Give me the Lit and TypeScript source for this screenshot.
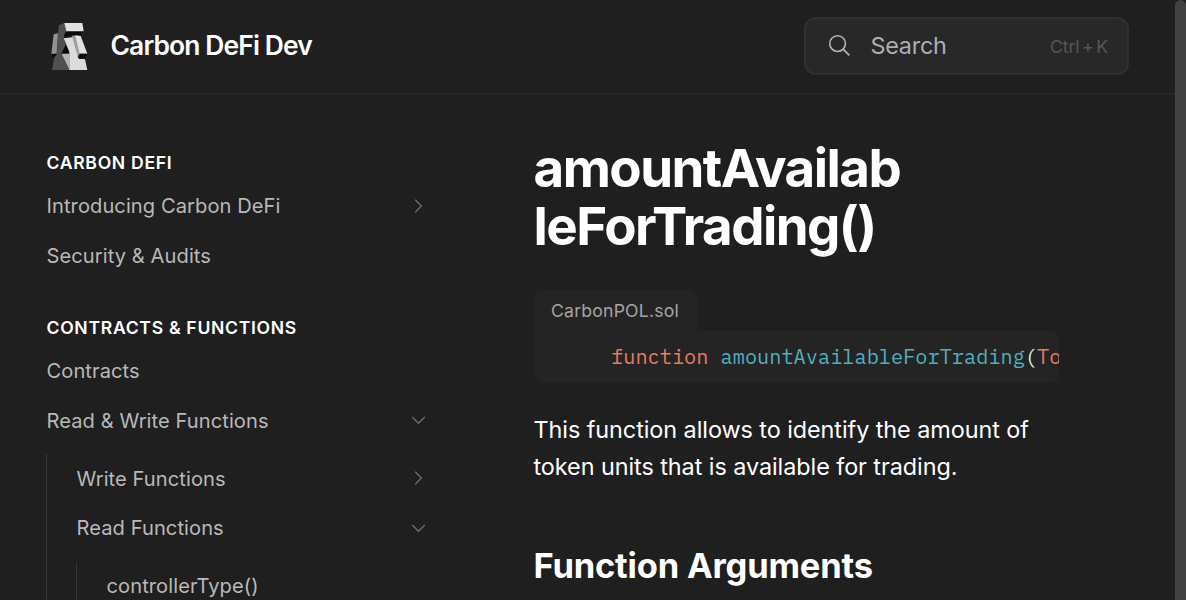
import { LitElement, html, css } from "lit";
import { customElement } from "lit/decorators.js";

interface NavItem {
  label: string;
  open?: boolean;
  children?: NavItem[];
}

const sections: { title: string; items: NavItem[] }[] = [
  {
    title: "Carbon DeFi",
    items: [{ label: "Introducing Carbon DeFi", open: false }, { label: "Security & Audits" }],
  },
  {
    title: "Contracts & Functions",
    items: [
      { label: "Contracts" },
      {
        label: "Read & Write Functions",
        open: true,
        children: [
          { label: "Write Functions", open: false },
          { label: "Read Functions", open: true, children: [{ label: "controllerType()" }] },
        ],
      },
    ],
  },
];

@customElement("app-root")
export class AppRoot extends LitElement {
  static styles = css`
    :host {
      display: flex;
      width: 1186px;
      height: 600px;
      overflow: hidden;
      background: #1f1f1f;
      color: #fff;
      font-family: Inter, sans-serif;
    }
    * { box-sizing: border-box; }
    svg { display: block; flex: none; }
    .page { width: 1175px; flex: none; }
    .scrollbar { width: 11px; height: 640px; flex: none; background: #424242; border-radius: 6px 6px 0 0; }
    .header {
      height: 95px;
      border-bottom: 2px solid #272727;
      display: flex;
      align-items: center;
      padding: 0 46px 1px 46px;
    }
    .mark { width: 47px; height: 47px; }
    .brand {
      margin: 0 0 2px 17.5px;
      font-size: 26.4px;
      font-weight: 600;
      letter-spacing: -0.85px;
      line-height: 36px;
      white-space: nowrap;
    }
    .search {
      margin-left: auto;
      width: 325px;
      height: 58px;
      border: 2px solid #303030;
      border-radius: 12px;
      background: #282828;
      display: flex;
      align-items: center;
      padding: 0 19px 1px 22px;
      color: #afafaf;
      font-size: 23.4px;
      letter-spacing: -0.25px;
      white-space: nowrap;
    }
    .search-icon { width: 23px; height: 23px; margin: 0 19.5px 1px 0; }
    .keys {
      margin-left: auto;
      font-size: 17.6px;
      color: #565656;
      letter-spacing: -0.1px;
      word-spacing: -2.2px;
      padding-top: 2px;
    }
    .body { display: flex; }
    .sidebar { width: 440px; flex: none; padding-top: 53px; }
    .section { margin-bottom: 33px; }
    .section-title {
      padding-left: 46.5px;
      height: 30px;
      line-height: 30px;
      font-size: 17.6px;
      font-weight: 600;
      letter-spacing: 0.69px;
      text-transform: uppercase;
      margin-bottom: 3.5px;
    }
    .row {
      display: flex;
      align-items: center;
      justify-content: space-between;
      height: 49.4px;
      padding: 0 14px 0 46.5px;
      font-size: 20.1px;
      letter-spacing: 0.08px;
      color: #b9b9b9;
      white-space: nowrap;
    }
    .chev { width: 16px; height: 16px; margin-bottom: 1.4px; }
    .group { margin: 8.6px 0 0 46px; border-left: 1px solid #353535; }
    .group .row { padding-left: 29.5px; }
    .group .group { margin-left: 29px; }
    .content { width: 526px; margin-left: 94px; padding-top: 43.5px; }
    .title {
      margin: 0 0 0 -0.5px;
      width: 400px;
      font-size: 52.8px;
      line-height: 58px;
      font-weight: 700;
      letter-spacing: -1.52px;
      white-space: nowrap;
    }
    .tab {
      margin-top: 35.5px;
      width: 163px;
      height: 41px;
      border-radius: 9px 9px 0 0;
      background: #242424;
      padding-left: 17px;
      line-height: 42px;
      font-size: 17.6px;
      letter-spacing: 0.22px;
      color: #a5a5a5;
    }
    .code {
      margin: 0;
      width: 525px;
      height: 52px;
      overflow: hidden;
      border-radius: 0 9px 9px 9px;
      background: #242424;
      padding-left: 28.4px;
      line-height: 52px;
      font-family: "IBM Plex Mono", "Liberation Mono", monospace;
      font-size: 20.3px;
      color: #f0f0f0;
    }
    .kw { color: #ea7a62; }
    .fn { color: #50b0bf; }
    .text { margin: 28px 0 0 -0.5px; font-size: 23.4px; line-height: 37px; letter-spacing: -0.06px; white-space: nowrap; }
    .subtitle { margin: 56px 0 0 -0.5px; font-size: 34.5px; line-height: 49px; font-weight: 700; letter-spacing: -0.18px; }
  `;

  private chevron(open: boolean) {
    return html`<svg class="chev" viewBox="0 0 16 16" fill="none" stroke="#6e6e6e" stroke-width="1.3">
      <path d=${open ? "M2.2 5 8.5 11.3 14.8 5" : "M5.2 1.7 11.4 8 5.2 14.3"} />
    </svg>`;
  }

  private item(i: NavItem): unknown {
    return html`<div class="row"><span>${i.label}</span>${i.open === undefined ? "" : this.chevron(i.open)}</div>
      ${i.children ? html`<div class="group">${i.children.map((c) => this.item(c))}</div>` : ""}`;
  }

  render() {
    return html`
      <div class="page">
        <header class="header">
          <svg class="mark" viewBox="18 39 141 141">
            <path fill="#505050" d="M56 46 73 39 80 67 71 84 78 108 64 131 88 151V180H36L42 145 51 132Z" />
            <path fill="#929292" d="M41 73 54 70 50 131 34 131Z" />
            <path fill="#0a0a0a" d="M36 133 50 131 40 144ZM77 105 89 129 64 131ZM79 63H131L125 76 97 74 78 82 71 77Z" />
            <path fill="#e2e2e2" d="M73 39H127L131 64H79Z" />
            <path fill="#dcdcdc" d="M71 85 98 82 117 146 135 148 142 180H88V125Z" />
            <path fill="#b5b5b5" d="M65 131H89V180Z" />
            <path fill="#a0a0a0" d="M96 77 108 77 121 131 114 143Z" />
            <path fill="#e2e2e2" d="M106 76 122 78 142 131H119Z" />
            <path fill="#0a0a0a" d="M113 142 119 131H142L136 143 118 147Z" />
          </svg>
          <span class="brand">Carbon DeFi Dev</span>
          <div class="search">
            <svg class="search-icon" viewBox="0 0 24 24" fill="none" stroke="#b4b4b4" stroke-width="1.7">
              <circle cx="10" cy="10" r="8.2" />
              <path d="M16 16 22.3 22.3" />
            </svg>
            <span>Search</span>
            <span class="keys">Ctrl + K</span>
          </div>
        </header>
        <div class="body">
          <nav class="sidebar">
            ${sections.map(
              (s) => html`<div class="section">
                <div class="section-title">${s.title}</div>
                ${s.items.map((i) => this.item(i))}
              </div>`
            )}
          </nav>
          <main class="content">
            <h1 class="title">amountAvailab<br />leForTrading()</h1>
            <div class="tab">CarbonPOL.sol</div>
            <pre class="code">    <span class="kw">function</span> <span class="fn">amountAvailableForTrading</span>(<span class="kw">Token</span></pre>
            <p class="text">This function allows to identify the amount of<br />token units that is available for trading.</p>
            <h2 class="subtitle">Function Arguments</h2>
          </main>
        </div>
      </div>
      <div class="scrollbar"></div>
    `;
  }
}
